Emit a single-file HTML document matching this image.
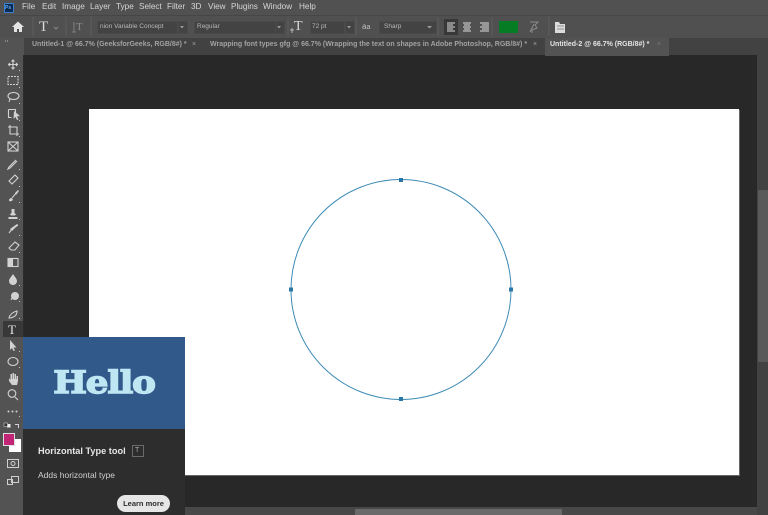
<!DOCTYPE html>
<html><head><meta charset="utf-8"><style>
html,body{margin:0;padding:0;width:768px;height:515px;overflow:hidden;background:#282828}
body{position:relative;font-family:"Liberation Sans",sans-serif}
div,span{position:absolute}
#w{left:0;top:0;width:768px;height:515px;overflow:hidden;filter:blur(.35px)}
.t{white-space:nowrap;color:#d0d0d0;line-height:12px}
.m{top:1px;font-size:8.2px;color:#d6d6d6}
.f{top:21px;height:11px;background:#434343;border:1px solid #4a4a4a}
.o{font-size:6.5px;color:#b8b8b8;top:21px}
.tb{top:39px;font-size:7px;font-weight:bold;color:#a2a2a2}
svg{position:absolute;left:0;top:0}
</style></head><body><div id="w">
<!-- bars -->
<div style="left:0;top:0;width:768px;height:15px;background:#515151"></div>
<div style="left:0;top:15px;width:768px;height:23px;background:#505050;border-top:1px solid #464646;box-sizing:border-box"></div>
<div style="left:0;top:38px;width:768px;height:18px;background:#424242"></div>
<div style="left:0;top:38px;width:24px;height:477px;background:#535353"></div>
<div style="left:23px;top:55px;width:1px;height:282px;background:#2c2c2c"></div>
<div style="left:24px;top:55px;width:733px;height:452px;background:#282828"></div>
<!-- ps logo -->
<div style="left:4px;top:3px;width:8px;height:8px;background:#0d2a52;border:.5px solid #3a82d0;border-radius:1px"></div>
<div class="t" style="left:5px;top:2px;font-size:5px;color:#5fb0f0;font-weight:bold">Ps</div>
<!-- menu -->
<div class="t m" style="left:22px">File</div>
<div class="t m" style="left:42px">Edit</div>
<div class="t m" style="left:62px">Image</div>
<div class="t m" style="left:90px">Layer</div>
<div class="t m" style="left:116px">Type</div>
<div class="t m" style="left:139px">Select</div>
<div class="t m" style="left:167px">Filter</div>
<div class="t m" style="left:191px">3D</div>
<div class="t m" style="left:208px">View</div>
<div class="t m" style="left:231px">Plugins</div>
<div class="t m" style="left:263px">Window</div>
<div class="t m" style="left:299px">Help</div>
<!-- options bar -->
<div class="f" style="left:97px;width:79px"></div>
<div class="f" style="left:178px;width:8px"></div>
<div class="f" style="left:194px;width:80px"></div>
<div class="f" style="left:275px;width:8px"></div>
<div class="f" style="left:310px;width:33px"></div>
<div class="f" style="left:345px;width:8px"></div>
<div class="f" style="left:379px;width:56px"></div>
<div class="t o" style="left:100px">nion Variable Concept</div>
<div class="t o" style="left:197px">Regular</div>
<div class="t o" style="left:312px">72 pt</div>
<div class="t o" style="left:384px">Sharp</div>
<div class="t" style="left:39px;top:20px;font:15px/15px 'Liberation Serif',serif;color:#d8d8d8">T</div>
<div class="t" style="left:76px;top:21px;font:11px/12px 'Liberation Serif',serif;color:#8c8c8c">T</div>
<div class="t" style="left:294px;top:20px;font:14px/14px 'Liberation Serif',serif;color:#d8d8d8">T</div>
<div class="t" style="left:362px;top:21px;font-size:8px;color:#c0c0c0">a<span style="position:static;font-size:7px">a</span></div>
<div style="left:444px;top:19px;width:14px;height:16px;background:#383838"></div>
<div style="left:499px;top:21px;width:19px;height:12px;background:#067d25"></div>
<!-- tabs -->
<div style="left:545px;top:38px;width:124px;height:18px;background:#535353"></div>
<div class="t tb" style="left:32px">Untitled-1 @ 66.7% (GeeksforGeeks, RGB/8#) *</div>
<div class="t tb" style="left:192px;font-weight:normal">×</div>
<div class="t tb" style="left:210px">Wrapping font types gfg @ 66.7% (Wrapping the text on shapes in Adobe Photoshop, RGB/8#) *</div>
<div class="t tb" style="left:533px;font-weight:normal">×</div>
<div class="t tb" style="left:550px;color:#e4e4e4">Untitled-2 @ 66.7% (RGB/8#) *</div>
<div class="t tb" style="left:657px;font-weight:normal;color:#777">×</div>
<!-- scrollbars -->
<div style="left:757px;top:56px;width:11px;height:459px;background:#424242"></div>
<div style="left:758px;top:190px;width:10px;height:172px;background:#5a5a5a"></div>
<div style="left:185px;top:507px;width:572px;height:8px;background:#484848"></div>
<div style="left:355px;top:509px;width:207px;height:6px;background:#6a6a6a"></div>
<!-- canvas -->
<div style="left:89px;top:109px;width:650px;height:366px;background:#fff;box-shadow:1px 1px 0 #666"></div>
<svg width="768" height="515" viewBox="0 0 768 515">
<circle cx="401" cy="289.500" r="110" fill="none" stroke="#3d8bb5" stroke-width="1"/>
<g fill="#2a78a8"><rect x="399" y="178" width="4" height="4"/><rect x="399" y="397" width="4" height="4"/><rect x="289" y="287.500" width="4" height="4"/><rect x="509" y="287.500" width="4" height="4"/></g>
<path d="M12 27l6-5.500 6 5.500h-2v5h-3v-3h-2v3h-3v-5z" fill="#e4e4e4"/>
<path d="M54 27l2 2 2-2" fill="none" stroke="#999" stroke-width=".8"/>
<g stroke="#5e5e5e" stroke-width="1" fill="none"><path d="M33 17v19M66 17v19M91 17v19M288 17v19M356 17v19M438 17v19M492 17v19M549 17v19"/></g>
<path d="M74 22v10M72 32h4" stroke="#8c8c8c" fill="none" stroke-width=".8"/>
<g fill="#999"><path d="M180 26l2 2.500 2-2.500zM277 26l2 2.500 2-2.500zM347 26l2 2.500 2-2.500zM427 26l2.500 2.500 2.500-2.500z"/></g>
<path d="M290 30h4M292 28v5" stroke="#ccc" stroke-width=".8"/>
<g stroke="#dcdcdc" stroke-width="1.100"><path d="M447 23h8M447 25h6M447 27h8M447 29h6M447 31h8"/><path d="M463 23h8M464 25h6M463 27h8M464 29h6M463 31h8"/><path d="M480 23h9M482 25h7M480 27h9M482 29h7M480 31h9"/></g>
<path d="M530 22h8l-3 3 2 3-5 2v3M534 24l-4 8" fill="none" stroke="#8a8a8a" stroke-width="1"/>
<path d="M555 22h4l1 2h5v9h-10z" fill="#dcdcdc"/><path d="M557 26h7M557 29h7" stroke="#777" stroke-width=".8"/>
<path d="M5 41h1M7 41h1" stroke="#bbb"/>
<g fill="none" stroke="#d2d2d2" stroke-width="1.100">
<path d="M13 60v9M8.500 64.500h9M11.500 61.500l1.500-1.500 1.500 1.500M11.500 67.500l1.500 1.500 1.500-1.500M10 63l-1.500 1.500 1.500 1.500M16 63l1.500 1.500-1.500 1.500"/>
<rect x="8" y="76.500" width="10" height="8" stroke-dasharray="2 1"/>
<ellipse cx="13.500" cy="96" rx="5.500" ry="3.500"/><path d="M10 99l-1 3"/>
<path d="M8.500 109.500h7v3M8.500 109.500v8h3"/>
<path d="M10 125v9h9M8 127h9v9"/>
<rect x="8" y="142" width="10" height="9"/><path d="M8 142l10 9M18 142l-10 9"/>
<path d="M16 160l-7 7-1 2 2-1 7-7"/>
<path d="M15 175l-6 6 3 3 6-6z"/>
<path d="M17 192l-5 6"/>
<path d="M11 215h4M9 217.500h8"/>
<path d="M18 225l-6 4M12 229l-3 4"/>
<path d="M15 242l-6 6 2 2h4l4-5z"/>
<rect x="8" y="258.500" width="10" height="8"/>
<path d="M16 293l-3 3-2 4"/>
<path d="M9 318c1-4 4-6 8-7 0 4-2 6-7 7z"/>
<ellipse cx="13" cy="361.500" rx="5" ry="4"/>
<circle cx="12" cy="393.500" r="3.800"/><path d="M15 397l3 3"/>
</g>
<g fill="#d2d2d2">
<path d="M14 111l6 5-3 .5 1.500 3-1.500.5-1.500-3-2 2z"/>
<path d="M15 193l3-3 1 1-3 4zM9 201c0-2 1-3 2.500-3l1.500 1.500c-.5 1.500-2 2-4 1.500z"/>
<path d="M11.500 209h3v4l2 2h-7l2-2z"/>
<rect x="8.500" y="217" width="9" height="2"/>
<path d="M10 229l7-5 1 1-6 6z"/>
<path d="M13 274c2 3 4 5 4 7a4 4 0 0 1-8 0c0-2 2-4 4-7z"/>
<circle cx="15" cy="296" r="4"/>
<rect x="8" y="259" width="5" height="7"/>
<path d="M10 340v10l2-2 1.500 3 1.500-.5-1.500-3h3z"/>
<path d="M9 378v3l3 4h5l1-4v-5h-1.500v3h-.500v-5h-1.500v5h-.500v-6h-1.500v6h-.500v-5h-1.500v6z"/>
<circle cx="8.500" cy="411.500" r="1"/><circle cx="12.500" cy="411.500" r="1"/><circle cx="16.500" cy="411.500" r="1"/>
<rect x="7" y="424" width="3.500" height="3.500" fill="#eee"/><rect x="4" y="423" width="3.500" height="3.500" fill="#333" stroke="#ddd" stroke-width=".5"/>
<path d="M15 424h4v4h-1v-3h-3z"/>
</g>
<g fill="#c4c4c4"><rect x="19" y="70" width="1" height="1"/><rect x="19" y="87" width="1" height="1"/><rect x="19" y="103" width="1" height="1"/><rect x="19" y="120" width="1" height="1"/><rect x="19" y="136" width="1" height="1"/><rect x="19" y="169" width="1" height="1"/><rect x="19" y="186" width="1" height="1"/><rect x="19" y="202" width="1" height="1"/><rect x="19" y="219" width="1" height="1"/><rect x="19" y="235" width="1" height="1"/><rect x="19" y="252" width="1" height="1"/><rect x="19" y="285" width="1" height="1"/><rect x="19" y="301" width="1" height="1"/><rect x="19" y="318" width="1" height="1"/><rect x="19" y="351" width="1" height="1"/><rect x="19" y="367" width="1" height="1"/><rect x="19" y="416" width="1" height="1"/></g>
</svg>
<!-- type tool highlight -->
<div style="left:3px;top:321px;width:20px;height:16px;background:#383838"></div>
<div class="t" style="left:8px;top:323px;font:13px/13px 'Liberation Serif',serif;color:#e4e4e4">T</div>
<!-- colours -->
<div style="left:9px;top:439px;width:12px;height:13px;background:#fff"></div>
<div style="left:3px;top:433px;width:10px;height:11px;background:#c22575;border:1px solid #ddd"></div>
<svg width="24" height="515" viewBox="0 0 24 515">
<g fill="none" stroke="#cfcfcf" stroke-width="1"><rect x="7.500" y="459.500" width="11" height="8"/><circle cx="13" cy="463.500" r="2"/><rect x="11.500" y="476.500" width="7" height="6"/><rect x="7.500" y="479.500" width="5" height="5"/></g>
</svg>
<!-- tooltip -->
<div style="left:23px;top:337px;width:162px;height:178px;background:#2d2d2d"></div>
<div style="left:23px;top:337px;width:162px;height:92px;background:#315a8a"></div>
<div style="left:23px;top:363px;width:162px;text-align:center;font:bold 31px/40px 'DejaVu Serif','Liberation Serif',serif;letter-spacing:-1px;color:#bfe6f3;-webkit-text-stroke:1.400px #bfe6f3;transform:scaleX(1.15);transform-origin:81px 0;white-space:nowrap">Hello</div>
<div class="t" style="left:38px;top:445px;font-size:9.200px;font-weight:bold;color:#e6e6e6">Horizontal Type tool</div>
<div style="left:132px;top:445px;width:10px;height:10px;border:1px solid #6a6a6a"></div>
<div class="t" style="left:135px;top:445px;font-size:7px;color:#aaa;line-height:11px">T</div>
<div class="t" style="left:38px;top:469px;font-size:8.500px;color:#d0d0d0">Adds horizontal type</div>
<div style="left:117px;top:495px;width:53px;height:17px;border-radius:9px;background:#e6e6e6"></div>
<div class="t" style="left:117px;top:498px;width:53px;text-align:center;font-size:7.500px;font-weight:bold;color:#2d2d2d">Learn more</div>
</div></body></html>
